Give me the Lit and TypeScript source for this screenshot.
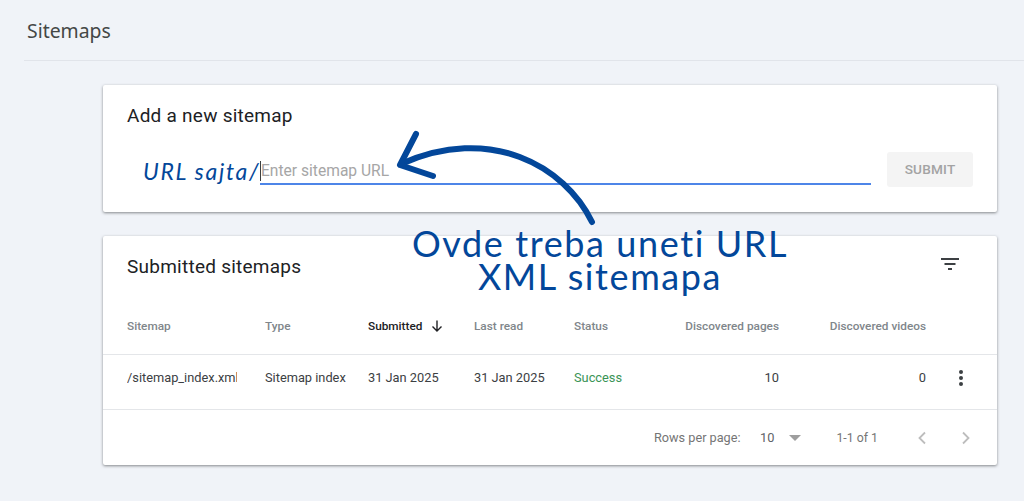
import { LitElement, css, html } from "lit";
import { customElement } from "lit/decorators.js";

const columns = [
  { label: "Sitemap", cell: "/sitemap_index.xml", first: true },
  { label: "Type", cell: "Sitemap index" },
  { label: "Submitted", cell: "31 Jan 2025", sorted: true },
  { label: "Last read", cell: "31 Jan 2025" },
  { label: "Status", cell: "Success", ok: true },
  { label: "Discovered pages", cell: "10", num: true },
  { label: "Discovered videos", cell: "0", num: true },
];

@customElement("app-root")
export class AppRoot extends LitElement {
  static styles = css`
    :host {
      display: block;
      position: relative;
      width: 1024px;
      height: 501px;
      overflow: hidden;
      background: #f0f3f8;
      font-family: Roboto, "Liberation Sans", sans-serif;
      color: #3c4043;
    }

    .head {
      margin-left: 24px;
      height: 61px;
      padding: 19px 0 0 3px;
      box-sizing: border-box;
      border-bottom: 1px solid #e1e4ea;
      font-family: "Noto Sans", sans-serif;
      font-size: 19.4px;
      line-height: 24px;
      color: #444746;
    }

    .content {
      display: flex;
      flex-direction: column;
      gap: 24px;
      width: 894px;
      margin: 24px 0 0 103px;
    }

    .card {
      background: #fff;
      border-radius: 2px;
      box-shadow: 0 1px 3px rgba(60, 64, 67, 0.6);
    }

    .add {
      height: 127px;
      box-sizing: border-box;
      padding: 19px 24px 0;
    }

    .add h2,
    .subs h2 {
      margin: 0;
      font-size: 19px;
      font-weight: 400;
      line-height: 24px;
      letter-spacing: 0.25px;
      color: #202124;
    }

    .form {
      display: flex;
      align-items: flex-end;
      margin-top: 24px;
    }

    .prefix {
      width: 133px;
      box-sizing: border-box;
      padding-left: 16px;
      font-family: Lato, sans-serif;
      font-style: italic;
      font-size: 23px;
      line-height: 28px;
      letter-spacing: 1.7px;
      color: #03479a;
      white-space: nowrap;
    }

    .field {
      width: 611px;
      height: 33px;
      box-sizing: border-box;
      border-bottom: 2px solid #4d85e8;
      font-size: 15.6px;
      line-height: 38px;
      color: #a6a6a6;
      display: flex;
    }

    .caret {
      width: 1px;
      height: 20px;
      margin-top: 9px;
      background: #3c4043;
    }

    .submit {
      width: 86px;
      height: 35px;
      margin: 0 0 -2px 16px;
      border-radius: 3px;
      background: #f4f4f4;
      color: #a3a3a3;
      font-size: 13.6px;
      font-weight: 500;
      line-height: 35px;
      text-align: center;
      letter-spacing: 0.2px;
    }

    .subs {
      height: 229px;
    }

    .subs-head {
      display: flex;
      justify-content: space-between;
      height: 70px;
      box-sizing: border-box;
      padding: 19px 35px 0 24px;
    }

    .filter {
      margin-top: -2px;
    }

    .table {
      display: grid;
      grid-template-columns: 162px 103px 106px 100px 80px 125px 147px 1fr;
    }

    .th {
      height: 49px;
      box-sizing: border-box;
      padding-bottom: 8px;
      display: flex;
      align-items: center;
      gap: 8px;
      font-size: 11.8px;
      font-weight: 500;
      color: #80868b;
      border-bottom: 1px solid #e4e6e9;
      white-space: nowrap;
    }

    .th.sorted {
      color: #202124;
    }

    .td {
      height: 55px;
      box-sizing: border-box;
      padding-bottom: 9px;
      display: flex;
      align-items: center;
      font-size: 12.8px;
      color: #3c4043;
      border-bottom: 1px solid #e4e6e9;
      white-space: nowrap;
    }

    .first {
      padding-left: 24px;
    }

    .clip {
      display: block;
      width: 110px;
      overflow: hidden;
    }

    .num {
      justify-content: flex-end;
    }

    .ok {
      color: #3a9456;
    }

    .menu {
      padding-left: 23px;
    }

    .pager {
      display: flex;
      align-items: center;
      height: 55px;
      padding-left: 551px;
      font-size: 12.7px;
      color: #757575;
    }

    .size {
      margin-left: 19.5px;
      color: #5f6368;
      font-size: 12.8px;
    }

    .drop {
      width: 0;
      height: 0;
      margin-left: 15px;
      border-left: 6px solid transparent;
      border-right: 6px solid transparent;
      border-top: 6px solid #9e9e9e;
    }

    .range {
      margin-left: 35px;
      width: 79px;
      font-size: 12.3px;
    }

    .next {
      margin-left: 30px;
    }

    .note {
      position: absolute;
      left: 300px;
      top: 227px;
      width: 600px;
      text-align: center;
      font-family: Lato, sans-serif;
      font-size: 36px;
      line-height: 33px;
      letter-spacing: 1.6px;
      color: #03479a;
    }

    .arrow {
      position: absolute;
      left: 0;
      top: 0;
      pointer-events: none;
    }
  `;

  render() {
    return html`
      <div class="head">Sitemaps</div>
      <div class="content">
        <div class="card add">
          <h2>Add a new sitemap</h2>
          <div class="form">
            <div class="prefix">URL sajta/</div>
            <div class="field"><span class="caret"></span>Enter sitemap URL</div>
            <div class="submit">SUBMIT</div>
          </div>
        </div>
        <div class="card subs">
          <div class="subs-head">
            <h2>Submitted sitemaps</h2>
            <svg class="filter" width="24" height="24" viewBox="0 0 24 24" fill="#3c4043">
              <path d="M3 5h18v2H3zM6.500 10h11v2h-11zM10 15h4v2h-4z" />
            </svg>
          </div>
          <div class="table">
            ${columns.map(
              (c) => html`<div class="th ${c.sorted ? "sorted" : ""} ${c.num ? "num" : ""} ${c.first ? "first" : ""}">
                ${c.label}
                ${c.sorted
                  ? html`<svg width="14" height="14" viewBox="0 0 14 14" fill="none" stroke="#202124" stroke-width="1.400">
                      <path d="M7 1.500v10.500M2.500 7.500L7 12l4.500-4.500" />
                    </svg>`
                  : ""}
              </div>`
            )}
            <div class="th"></div>
            ${columns.map(
              (c) => html`<div class="td ${c.num ? "num" : ""} ${c.ok ? "ok" : ""} ${c.first ? "first" : ""}">
                <span class=${c.first ? "clip" : ""}>${c.cell}</span>
              </div>`
            )}
            <div class="td menu">
              <svg width="24" height="24" viewBox="0 0 24 24" fill="#3c4043">
                <circle cx="12" cy="6" r="2" />
                <circle cx="12" cy="12" r="2" />
                <circle cx="12" cy="18" r="2" />
              </svg>
            </div>
          </div>
          <div class="pager">
            <span>Rows per page:</span>
            <span class="size">10</span>
            <span class="drop"></span>
            <span class="range">1-1 of 1</span>
            <svg width="14" height="16" viewBox="0 0 14 16" fill="none" stroke="#bdbdbd" stroke-width="1.800">
              <path d="M10 2.500L4.500 8l5.500 5.500" />
            </svg>
            <svg class="next" width="14" height="16" viewBox="0 0 14 16" fill="none" stroke="#bdbdbd" stroke-width="1.800">
              <path d="M4 2.500L9.500 8 4 13.500" />
            </svg>
          </div>
        </div>
      </div>
      <div class="note">Ovde treba uneti URL<br />XML sitemapa</div>
      <svg class="arrow" width="1024" height="501" viewBox="0 0 1024 501" fill="none" stroke="#03479a" stroke-width="6" stroke-linecap="round" stroke-linejoin="round">
        <path d="M592 222C565 166 490 124 401 164" />
        <path d="M416 134L400 165L433 176" />
      </svg>
    `;
  }
}
